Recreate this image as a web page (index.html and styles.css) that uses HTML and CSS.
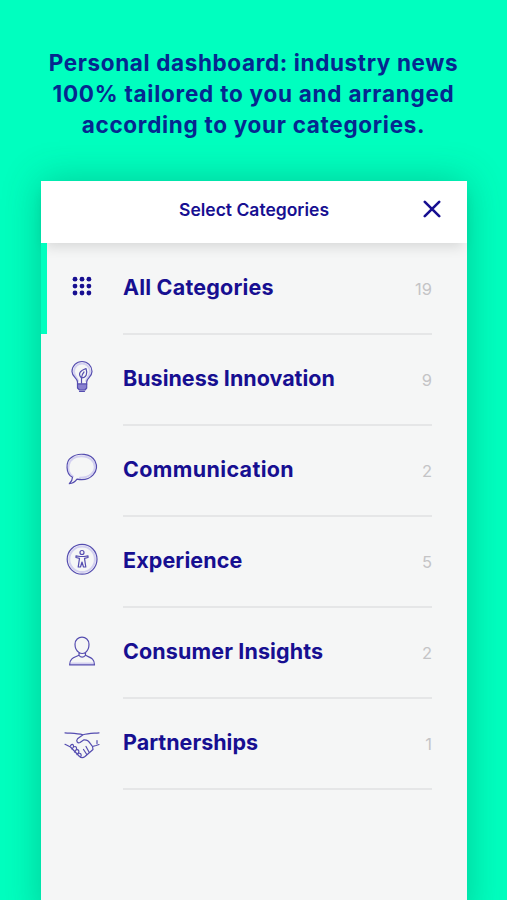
FILE: index.html
```
<!DOCTYPE html>
<html lang="en">
<head>
    <meta charset="UTF-8">
    <meta name="viewport" content="width=device-width, initial-scale=1.0">
    <title>Select Categories</title>
    <link rel="stylesheet" href="styles.css">
</head>
<body>
    <h1 class="headline">
        <span>Personal dashboard: industry news</span>
        <span class="line-2">100% tailored to you and arranged</span>
        <span class="line-3">according to your categories.</span>
    </h1>
    <main class="panel">
        <header class="panel-header">
            <h2>Select Categories</h2>
            <button class="close" aria-label="Close">
                <svg width="18" height="18" viewBox="0 0 18 18"><path d="M1.8 1.8L16.2 16.2M16.2 1.8L1.8 16.2"/></svg>
            </button>
        </header>
        <ul class="categories">
            <li class="category active">
                <svg class="icon dots" viewBox="0 0 60 60">
                    <circle cx="20" cy="19.2" r="2.4"/><circle cx="27" cy="19.2" r="2.4"/><circle cx="33.9" cy="19.2" r="2.4"/>
                    <circle cx="20" cy="26.1" r="2.4"/><circle cx="27" cy="26.1" r="2.4"/><circle cx="33.9" cy="26.1" r="2.4"/>
                    <circle cx="20" cy="33" r="2.4"/><circle cx="27" cy="33" r="2.4"/><circle cx="33.9" cy="33" r="2.4"/>
                </svg>
                <div class="row"><span class="name all">All Categories</span><span class="count">19</span></div>
            </li>
            <li class="category">
                <svg class="icon" viewBox="0 0 60 60">
                    <path class="soft" d="M23 31C22 27 19 26 19 21.500A8 8 0 0 1 35 21.500C35 26 32 27 31 31"/>
                    <path d="M22.500 34V32C22.500 28 17 27 17 21.500A10 10 0 0 1 37 21.500C37 27 31.700 28 31.700 32V34Z"/>
                    <path class="fill" d="M22.500 34H31.700V38L30 40H24.500L22.500 38Z"/>
                    <path d="M24.500 41.300H29.500M26.500 33V28.500M26.500 28C22.500 24 25 20.500 31 18.500C33 24 31 28 26.500 28Q27 24 29 22"/>
                </svg>
                <div class="row"><span class="name business">Business Innovation</span><span class="count">9</span></div>
            </li>
            <li class="category">
                <svg class="icon" viewBox="0 0 60 60">
                    <path class="soft" d="M18 35.500C10 30 12.500 15.500 26 15.200C44 15 45 36.500 25 36.800"/>
                    <path d="M17.500 36.300C10.500 33 10.500 20.500 16 16.800C23 11 36 12.500 40 20C45 30 36 41 22 38.200C20 41 17.500 42.500 14.300 42.700C16.700 40.500 17.500 38.500 17.500 36.300Z"/>
                </svg>
                <div class="row"><span class="name communication">Communication</span><span class="count">2</span></div>
            </li>
            <li class="category">
                <svg class="icon raised" viewBox="0 0 60 60">
                    <circle cx="27.100" cy="29.300" r="14.900"/>
                    <circle class="soft" cx="27.100" cy="29.300" r="12.800"/>
                    <circle cx="27" cy="22.500" r="2"/>
                    <path d="M21 25.800L25 26.500H29L33 25.800V27.500L29.500 28.300L30.800 37H28.500L27 32L25.500 37H23.200L24.500 28.300L21 27.500Z"/>
                </svg>
                <div class="row"><span class="name experience">Experience</span><span class="count">5</span></div>
            </li>
            <li class="category">
                <svg class="icon raised" viewBox="0 0 60 60">
                    <path class="soft" d="M15.800 42.500H38.200"/>
                    <path d="M24 31.500C21.500 30 20 27 20 23.300C20 13.800 34 13.800 34 23.300C34 27 32.500 30 30.500 31.500Q27 33.500 24 31.500ZM24 31.700V34.300C20 36.500 14.600 36.500 14.600 43.900H39.500C39.500 36.500 34 36.500 30.500 34.300V31.700M24 34.300Q27 38 30.500 34.300"/>
                </svg>
                <div class="row"><span class="name consumer">Consumer Insights</span><span class="count">2</span></div>
            </li>
            <li class="category">
                <svg class="icon raised" viewBox="0 0 60 60">
                    <path d="M10 20.800C17 21.400 22 21.300 28 22.800C33 21.300 37 21.400 44 20.800M28 22.800L22.500 26.800C20.700 29 22.500 31.500 25 30.500L29 27.800C33 27.500 34 30 37.500 34.500L38 37.500L30 44.500C28 46 26.500 46 24.500 44.500L15.500 35L10 32.300M37.500 34.500L41 33.500L44 32.500M42 28.500V31.500"/>
                    <path d="M15.500 34C16 31.500 19 32 18.500 35C21 33.500 22.500 36 21 38C23.500 37 25 39.500 23 41.500C26 40.500 27 43 25.500 45M17 37L18.500 35M19.500 40L21 38M22 42.500L23 41.500M31 34.500L34 40M28.500 37.500L31.800 42.500"/>
                </svg>
                <div class="row"><span class="name partnerships">Partnerships</span><span class="count">1</span></div>
            </li>
        </ul>
    </main>
</body>
</html>
```
FILE: styles.css
```
* {
    box-sizing: border-box;
}

body {
    margin: 0;
    height: 900px;
    overflow: hidden;
    background: #00ffbf;
    color: #170f91;
    font-family: Inter, "Liberation Sans", sans-serif;
}

.headline {
    display: flex;
    flex-direction: column;
    align-items: center;
    height: 181px;
    margin: 0;
    padding-top: 47px;
    color: #06278f;
    font-size: 22.5px;
    font-weight: 700;
    line-height: 31px;
    letter-spacing: 0.62px;
    white-space: nowrap;
}

.line-2 {
    letter-spacing: 0.75px;
}

.line-3 {
    letter-spacing: 0.7px;
}

.panel {
    width: 426px;
    height: 740px;
    margin-left: 41px;
    background: #f5f6f6;
    box-shadow: 0 0 36px rgba(0, 80, 60, 0.3);
}

.panel-header {
    display: grid;
    grid-template-columns: 60px 1fr 60px;
    align-items: center;
    height: 62px;
    padding-bottom: 6px;
    background: #fff;
    box-shadow: 0 8px 12px -4px rgba(0, 0, 0, 0.12);
}

.panel-header h2 {
    grid-column: 2;
    margin: 0;
    font-size: 17.5px;
    font-weight: 600;
    text-align: center;
    white-space: nowrap;
}

.close {
    display: flex;
    justify-content: flex-end;
    padding: 0 26px 0 0;
    border: 0;
    background: none;
}

.close svg {
    flex: none;
    fill: none;
    stroke: #170f91;
    stroke-width: 2.6;
    stroke-linecap: round;
}

.categories {
    margin: 0;
    padding: 0;
    list-style: none;
}

.category {
    display: flex;
    height: 91.05px;
    padding: 16px 35px 0 8px;
    border-left: 6px solid transparent;
}

.category.active {
    border-left-color: #00ffbf;
}

.icon {
    flex: none;
    width: 60px;
    height: 60px;
    fill: none;
    stroke: #554db0;
    stroke-width: 1.2;
    stroke-linejoin: round;
    stroke-linecap: round;
}

.icon.raised {
    margin-top: -2px;
}

.icon .soft {
    stroke: #d3d0f0;
    stroke-width: 2;
}

.icon .fill {
    fill: #8981cf;
}

.icon.dots {
    margin-top: 1px;
    fill: #170f91;
    stroke: none;
}

.row {
    display: flex;
    flex: 1;
    justify-content: space-between;
    margin: 0 0 -1px 8px;
    padding-top: 12px;
    border-bottom: 2px solid #e5e6e7;
    line-height: 32px;
}

.name {
    font-size: 21.5px;
    font-weight: 700;
    white-space: nowrap;
}

.all {
    letter-spacing: 0.2px;
}

.communication {
    letter-spacing: 0.35px;
}

.experience,
.consumer {
    letter-spacing: 0.12px;
}

.count {
    padding-top: 2px;
    color: #c4c4c6;
    font-size: 16.5px;
}
```
